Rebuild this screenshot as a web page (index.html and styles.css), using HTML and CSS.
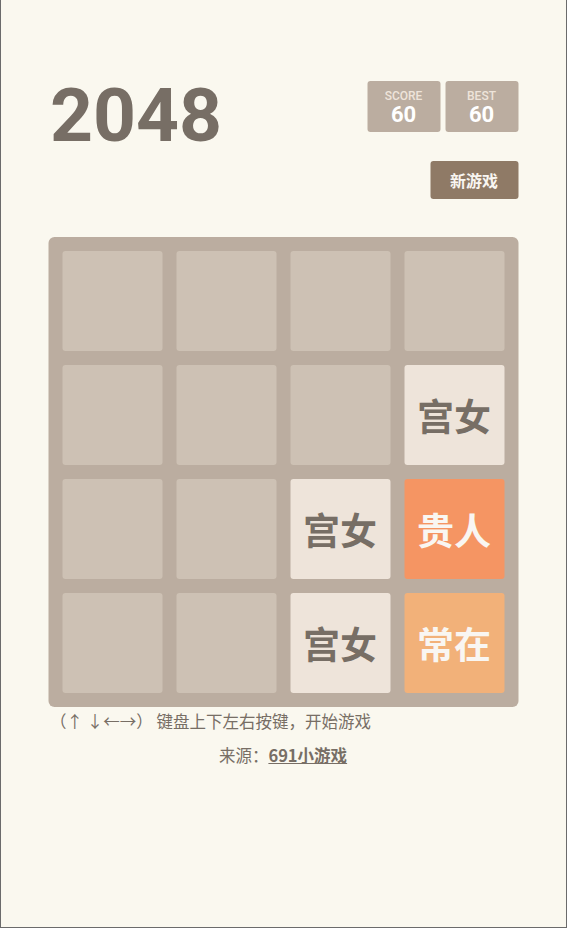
FILE: index.html
```html
<!DOCTYPE html>
<html lang="zh">
<head>
<meta charset="utf-8">
<title>2048</title>
<link rel="stylesheet" href="styles.css">
</head>
<body>
<div class="frame">
  <div class="container">
    <div class="heading">
      <h1 class="title">2048</h1>
      <div class="scores">
        <div class="score-box"><span class="label">SCORE</span><span class="value">60</span></div>
        <div class="score-box"><span class="label">BEST</span><span class="value">60</span></div>
      </div>
    </div>
    <div class="actions">
      <a class="new-game">新游戏</a>
    </div>
    <div class="grid">
      <div class="cell"></div><div class="cell"></div><div class="cell"></div><div class="cell"></div>
      <div class="cell"></div><div class="cell"></div><div class="cell"></div><div class="cell t2">宫女</div>
      <div class="cell"></div><div class="cell"></div><div class="cell t2">宫女</div><div class="cell t16">贵人</div>
      <div class="cell"></div><div class="cell"></div><div class="cell t2">宫女</div><div class="cell t8">常在</div>
    </div>
    <p class="hint">（↑ ↓←→） 键盘上下左右按键，开始游戏</p>
    <p class="source">来源：<a class="src-link">691小游戏</a></p>
  </div>
</div>
</body>
</html>
```
FILE: styles.css
```css
html, body {
  margin: 0;
  padding: 0;
  background: #faf8ef;
}
.frame {
  box-sizing: border-box;
  width: 567px;
  height: 928px;
  border: 1px solid #6b6b6b;
  border-top: none;
  background: #faf8ef;
  font-family: "Noto Sans CJK SC", "Noto Sans", sans-serif;
  color: #776e65;
}
.container {
  width: 470px;
  margin: 0 auto;
  padding-top: 80px;
  transform: translateX(-0.5px);
}
.heading {
  display: flex;
  justify-content: space-between;
  align-items: flex-start;
  height: 70px;
}
.title {
  margin: 0;
  font-family: Roboto, "Liberation Sans", sans-serif;
  font-weight: 700;
  font-size: 75px;
  line-height: 70px;
  color: #776e65;
  padding-left: 2px;
}
.scores {
  display: flex;
  gap: 5px;
  padding-top: 1px;
}
.score-box {
  width: 73px;
  height: 51px;
  background: #bbada0;
  border-radius: 3px;
  display: flex;
  flex-direction: column;
  align-items: center;
  font-family: Roboto, "Liberation Sans", sans-serif;
}
.label {
  font-size: 12px;
  line-height: 14px;
  margin-top: 8px;
  color: #eee4da;
  font-weight: 500;
}
.value {
  font-size: 22px;
  line-height: 24px;
  font-weight: 700;
  color: #ffffff;
}
.actions {
  display: flex;
  justify-content: flex-end;
  margin-top: 11px;
}
.new-game {
  display: block;
  width: 88px;
  height: 38px;
  line-height: 38px;
  text-align: center;
  background: #8f7a66;
  color: #f9f6f2;
  border-radius: 3px;
  font-weight: 700;
  font-size: 16px;
}
.grid {
  margin-top: 38px;
  width: 470px;
  height: 470px;
  box-sizing: border-box;
  padding: 14px;
  background: #bbada0;
  border-radius: 6px;
  display: grid;
  grid-template-columns: repeat(4, 100px);
  grid-template-rows: repeat(4, 100px);
  gap: 14px;
}
.cell {
  background: #cdc1b4;
  border-radius: 3px;
  display: flex;
  align-items: center;
  justify-content: center;
  font-weight: 700;
  font-size: 37px;
}
.t2 {
  background: #eee4da;
  color: #776e65;
}
.t8 {
  background: #f2b179;
  color: #f9f6f2;
}
.t16 {
  background: #f59563;
  color: #f9f6f2;
}
.hint {
  margin: 0;
  padding-left: 2px;
  font-size: 16.5px;
  line-height: 28px;
  color: #776e65;
}
.source {
  margin: 9px 0 0;
  text-align: center;
  font-size: 16.5px;
  line-height: 22px;
  color: #776e65;
}
.src-link {
  font-weight: 700;
  text-decoration: underline;
}
```
